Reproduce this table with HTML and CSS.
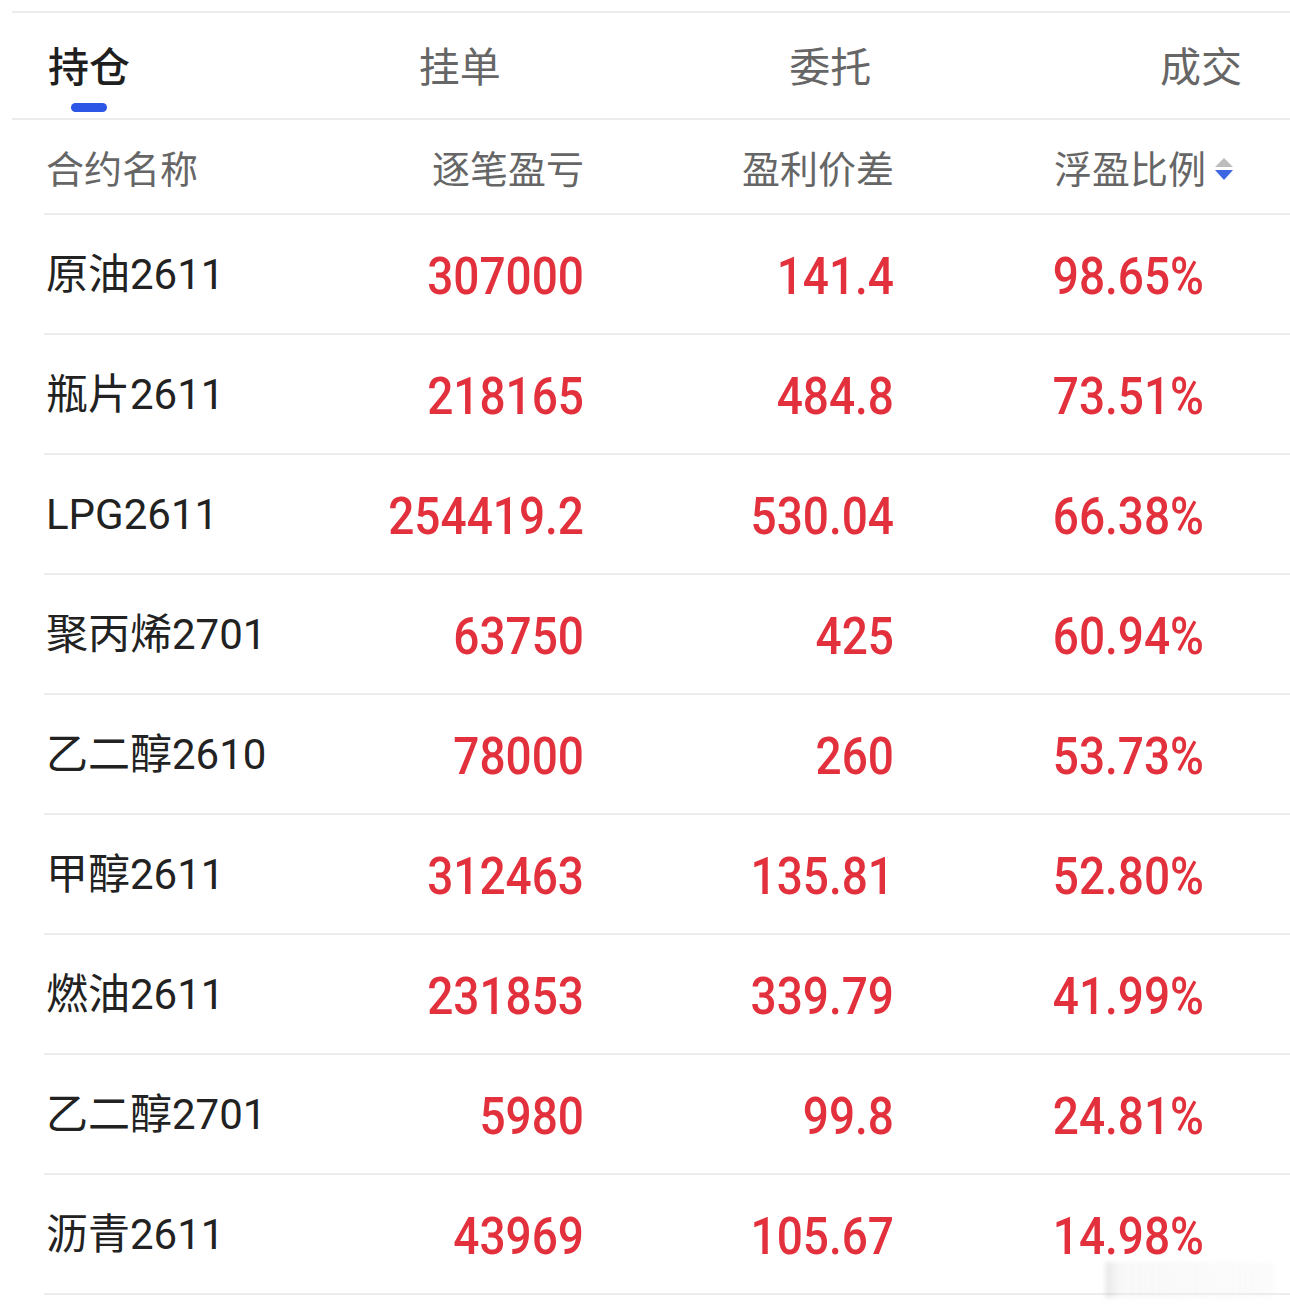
FILE: index.html
```html
<!DOCTYPE html>
<html lang="zh-CN">
<head>
<meta charset="utf-8">
<title>持仓</title>
<link rel="stylesheet" href="styles.css">
</head>
<body>
<div class="page">
  <nav class="tabs">
    <div class="tab active"><span class="tab-label">持仓</span><span class="tab-bar"></span></div>
    <div class="tab"><span class="tab-label">挂单</span></div>
    <div class="tab"><span class="tab-label">委托</span></div>
    <div class="tab"><span class="tab-label">成交</span></div>
  </nav>

  <div class="table">
    <div class="row head">
      <div class="cell name">合约名称</div>
      <div class="cell num">逐笔盈亏</div>
      <div class="cell num">盈利价差</div>
      <div class="cell num sortable">浮盈比例<span class="sort"><span class="up"></span><span class="down"></span></span></div>
    </div>

    <div class="row"><div class="cell name">原油2611</div><div class="cell num"><span class="val">307000</span></div><div class="cell num"><span class="val">141.4</span></div><div class="cell num"><span class="val">98.65%</span></div></div>
    <div class="row"><div class="cell name">瓶片2611</div><div class="cell num"><span class="val">218165</span></div><div class="cell num"><span class="val">484.8</span></div><div class="cell num"><span class="val">73.51%</span></div></div>
    <div class="row"><div class="cell name">LPG2611</div><div class="cell num"><span class="val">254419.2</span></div><div class="cell num"><span class="val">530.04</span></div><div class="cell num"><span class="val">66.38%</span></div></div>
    <div class="row"><div class="cell name">聚丙烯2701</div><div class="cell num"><span class="val">63750</span></div><div class="cell num"><span class="val">425</span></div><div class="cell num"><span class="val">60.94%</span></div></div>
    <div class="row"><div class="cell name">乙二醇2610</div><div class="cell num"><span class="val">78000</span></div><div class="cell num"><span class="val">260</span></div><div class="cell num"><span class="val">53.73%</span></div></div>
    <div class="row"><div class="cell name">甲醇2611</div><div class="cell num"><span class="val">312463</span></div><div class="cell num"><span class="val">135.81</span></div><div class="cell num"><span class="val">52.80%</span></div></div>
    <div class="row"><div class="cell name">燃油2611</div><div class="cell num"><span class="val">231853</span></div><div class="cell num"><span class="val">339.79</span></div><div class="cell num"><span class="val">41.99%</span></div></div>
    <div class="row"><div class="cell name">乙二醇2701</div><div class="cell num"><span class="val">5980</span></div><div class="cell num"><span class="val">99.8</span></div><div class="cell num"><span class="val">24.81%</span></div></div>
    <div class="row"><div class="cell name">沥青2611</div><div class="cell num"><span class="val">43969</span></div><div class="cell num"><span class="val">105.67</span></div><div class="cell num"><span class="val">14.98%</span></div></div>
  </div>

  <div class="watermark"></div>
</div>
</body>
</html>
```

FILE: styles.css
```css
html, body {
  margin: 0;
  padding: 0;
  background: #ffffff;
}

.page {
  position: relative;
  width: 1290px;
  height: 1313px;
  padding-top: 11px;
  box-sizing: border-box;
  font-family: "Noto Sans CJK SC", "Noto Sans", sans-serif;
  overflow: hidden;
}

.tabs {
  margin-left: 12px;
  border-top: 2px solid #ececec;
  border-bottom: 2px solid #ececec;
  height: 109px;
  box-sizing: border-box;
  padding: 0 48px 0 36px;
  display: flex;
  justify-content: space-between;
  align-items: flex-start;
}

.tab {
  display: flex;
  flex-direction: column;
  align-items: center;
  padding-top: 31px;
}

.tab-label {
  font-size: 41px;
  line-height: 41px;
  color: #666666;
}

.tab.active .tab-label {
  color: #1f1f1f;
  font-weight: 500;
}

.tab-bar {
  margin-top: 18px;
  width: 36px;
  height: 9px;
  border-radius: 5px;
  background: #2b56e6;
}

.table {
  margin-left: 44px;
}

.row {
  display: grid;
  grid-template-columns: 226px 312px 310px 310px 1fr;
  align-items: center;
  height: 120px;
  box-sizing: border-box;
  border-bottom: 2px solid #ededed;
  padding-left: 2px;
}

.row.head {
  height: 95px;
}

.cell {
  white-space: nowrap;
}

.name {
  font-family: Roboto, "Noto Sans CJK SC", sans-serif;
  font-size: 42px;
  line-height: 44px;
  color: #222222;
  padding-top: 2px;
}

.num {
  display: flex;
  justify-content: flex-end;
  align-items: center;
}

.head .cell {
  font-family: "Noto Sans CJK SC", sans-serif;
  font-size: 38px;
  line-height: 44px;
  color: #666666;
  padding-top: 0;
}

.val {
  display: inline-block;
  font-family: Roboto, "Liberation Sans", sans-serif;
  font-weight: 500;
  font-size: 46px;
  line-height: 50px;
  color: #e2303c;
  transform: scaleY(1.13);
  transform-origin: center;
  margin-top: 4px;
}

.sortable {
  margin-right: -30px;
}

.sort {
  display: flex;
  flex-direction: column;
  align-items: center;
  gap: 3px;
  width: 20px;
  margin-left: 8px;
  padding-top: 4px;
}

.sort .up {
  width: 0;
  height: 0;
  border-left: 9px solid transparent;
  border-right: 9px solid transparent;
  border-bottom: 9px solid #bdbdbd;
}

.sort .down {
  width: 0;
  height: 0;
  border-left: 9px solid transparent;
  border-right: 9px solid transparent;
  border-top: 10px solid #3d66e3;
}

.watermark {
  position: absolute;
  left: 1105px;
  top: 1262px;
  width: 170px;
  height: 36px;
  background: linear-gradient(90deg, rgba(200,200,200,0.35) 0px, rgba(200,200,200,0.35) 6px, rgba(235,235,235,0.35) 14px, rgba(240,240,240,0.25) 100%);
  filter: blur(2px);
}
```
